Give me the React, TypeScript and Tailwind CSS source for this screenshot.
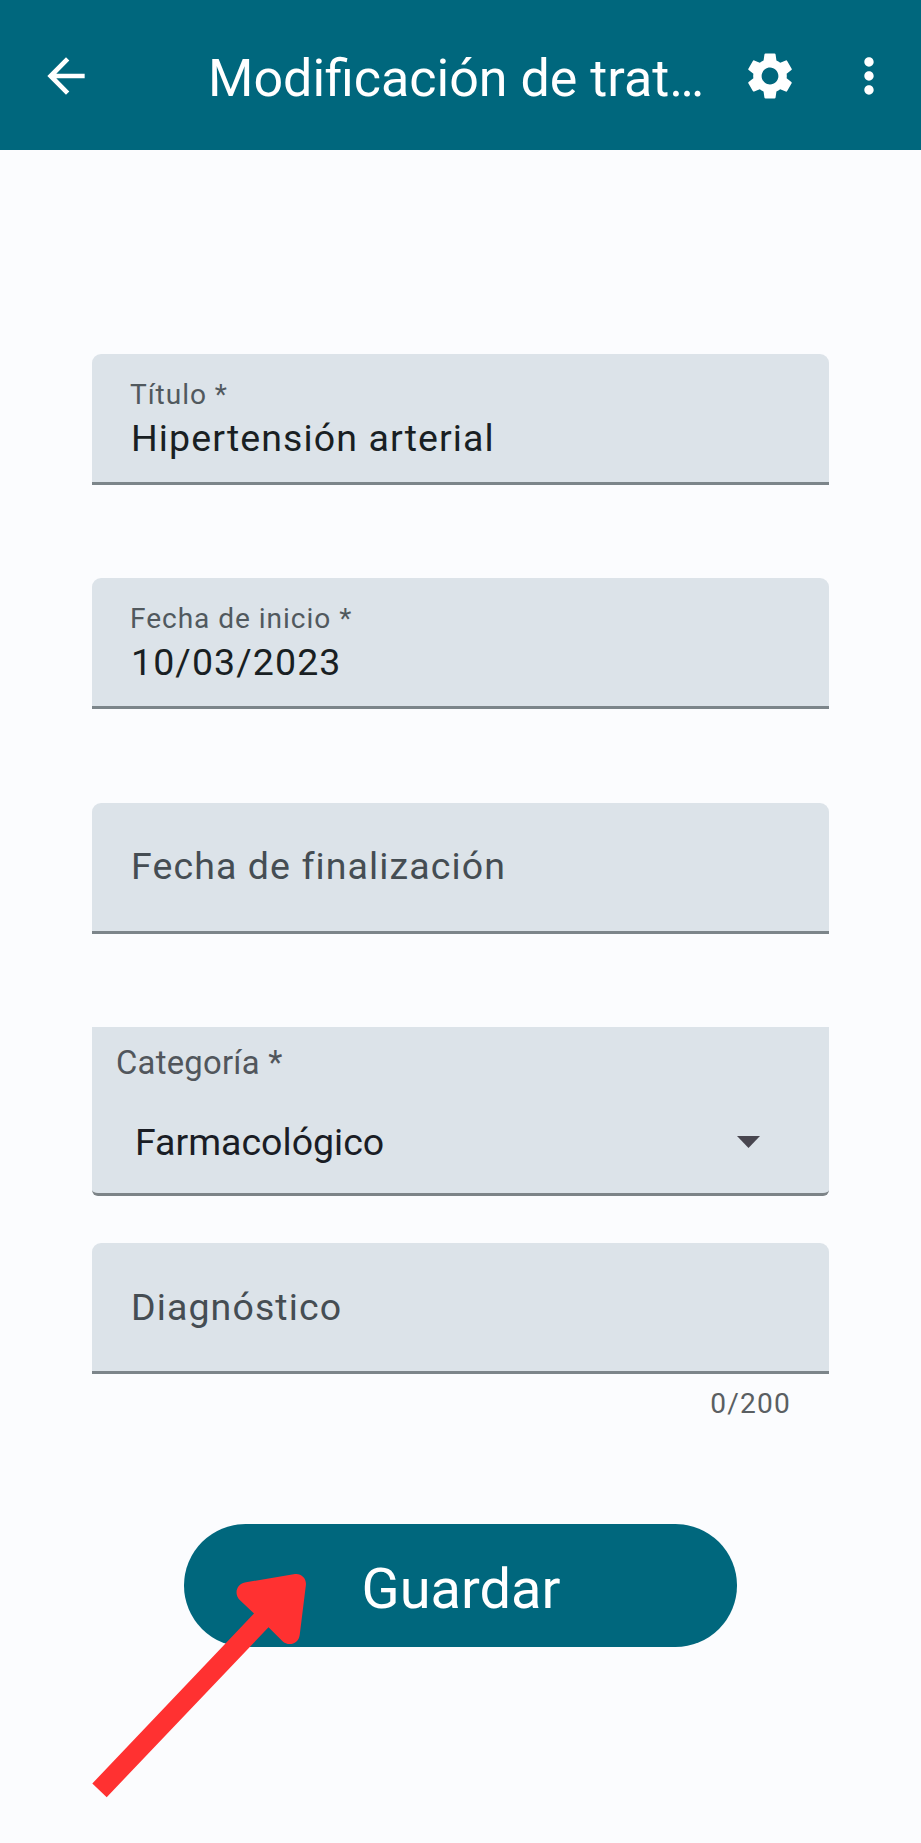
import type { ReactNode } from "react";
import { MdArrowBack, MdMoreVert, MdSettings } from "react-icons/md";

function Field({ children, className = "" }: { children: ReactNode; className?: string }) {
  return (
    <div
      className={`flex h-[131px] w-full flex-col rounded-t-[9px] border-b-[3px] border-[#7c858a] bg-[#dce3e9] px-[38px] ${className}`}
    >
      {children}
    </div>
  );
}

function FilledField({ label, value, className = "" }: { label: string; value: string; className?: string }) {
  return (
    <Field className={`gap-[5px] pt-6 ${className}`}>
      <label className="text-[28.1px] leading-[33px] tracking-[0.95px] text-[#51595e]">{label}</label>
      <span className="pl-px text-[37.5px] leading-[44px] tracking-[1.1px] text-[#191f23]">{value}</span>
    </Field>
  );
}

function EmptyField({ label, className = "" }: { label: string; className?: string }) {
  return (
    <Field className={`justify-center ${className}`}>
      <label className="pl-px text-[37.5px] leading-[44px] tracking-[1.1px] text-[#454d53]">{label}</label>
    </Field>
  );
}

export default function App() {
  return (
    <div className="relative h-[1843px] w-[921px] overflow-hidden bg-[#fbfcfe] font-['Roboto',sans-serif]">
      <header className="flex h-[150px] items-center bg-[#00677d] pt-px pl-[38px] text-white">
        <MdArrowBack className="size-14 shrink-0" />
        <h1 className="ml-[114px] mr-[38px] w-[496px] shrink-0 pt-[6px] text-[52px] leading-[60px] font-normal whitespace-nowrap">
          Modificación de trat…
        </h1>
        <MdSettings className="size-14 shrink-0" />
        <MdMoreVert className="ml-[43px] size-14 shrink-0" />
      </header>

      <main className="flex flex-col px-[92px] pt-[204px]">
        <FilledField label="Título *" value="Hipertensión arterial" />
        <FilledField label="Fecha de inicio *" value="10/03/2023" className="mt-[93px]" />
        <EmptyField label="Fecha de finalización" className="mt-[94px] pb-[2px]" />

        <div className="mt-[93px] flex h-[169px] flex-col rounded-b-[6px] border-b-[3px] border-[#7c8387] bg-[#dce3e9] pt-4">
          <label className="pl-6 text-[32.8px] leading-10 tracking-[0.25px] text-[#51565c]">Categoría *</label>
          <div className="mt-[37px] flex items-center justify-between pr-[69px] pl-[43px]">
            <span className="text-[37.5px] leading-[44px] text-[#1a1d25]">Farmacológico</span>
            <svg width="23" height="12" viewBox="0 0 23 12" fill="#48464f">
              <path d="M0 0h23L11.500 12z" />
            </svg>
          </div>
        </div>

        <EmptyField label="Diagnóstico" className="mt-[47px] pb-px" />
        <p className="mt-3.5 pr-[38px] text-right text-[28.1px] leading-8 tracking-[1.2px] text-[#5a5f62]">0/200</p>

        <button className="mt-[104px] flex h-[123px] w-[553px] items-center justify-center self-center rounded-full bg-[#00677d] pt-[7px] pl-px text-[56px] leading-[66px] text-white">
          Guardar
        </button>
      </main>

      <svg className="absolute top-[1573px] left-[91px]" width="216" height="225" viewBox="91 1573 216 225" fill="#ff3131">
        <path d="M92.300 1783.500L254 1613.500L240 1600.200C233.500 1594 236.500 1583.600 246 1582.300L295 1574C301.500 1573.200 306.600 1578.500 305.900 1585L299.700 1635C298.500 1644 288.500 1647 282.300 1641L268.500 1627.300L106.700 1797.200Z" />
      </svg>
    </div>
  );
}
